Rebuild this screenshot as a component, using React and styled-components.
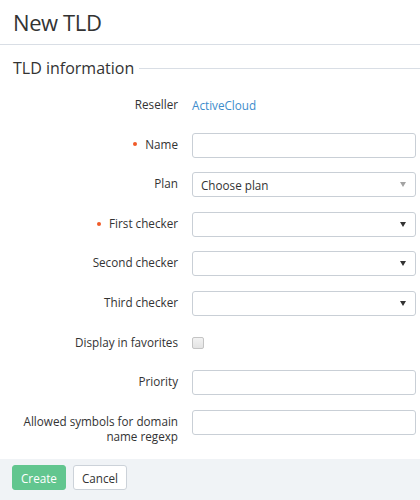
import styled, { createGlobalStyle } from "styled-components";

const Global = createGlobalStyle`
  html, body {
    margin: 0;
    padding: 0;
    background: #fff;
    font-family: "Open Sans", "Liberation Sans", sans-serif;
    color: #333;
  }
  * { box-sizing: border-box; }
`

const Page = styled.div`
  width: 420px;
  height: 500px;
  display: flex;
  flex-direction: column;
  overflow: hidden;
  & > * { flex-shrink: 0; }
`

const Header = styled.div`
  height: 45px;
  padding: 0 13px 1px;
  display: flex;
  align-items: center;
  border-bottom: 1px solid #d9dee5;
  h1 {
    margin: 0;
    font-size: 22px;
    font-weight: 400;
    color: #333;
    letter-spacing: -0.4px;
  }
`

const Legend = styled.div`
  display: flex;
  align-items: center;
  gap: 5px;
  margin: 11px 0 0 13px;
  height: 24px;
  span {
    font-size: 16px;
    color: #333;
    white-space: nowrap;
  }
  &::after {
    content: "";
    flex: 1;
    height: 1px;
    background: #d9dee5;
  }
`

const Form = styled.div`
  flex: 1;
  display: flex;
  flex-direction: column;
  gap: 14.6px;
  padding-top: 13px;
`

const Row = styled.div`
  display: grid;
  grid-template-columns: 178px 1fr;
  column-gap: 14px;
  align-items: start;
  min-height: 25px;
  padding-right: 4px;
`

const Label = styled.div`
  text-align: right;
  font-size: 11.7px;
  line-height: 15px;
  padding-top: 4px;
  color: #333;
  ${p => p.$required && `
    &::before {
      content: "";
      display: inline-block;
      width: 4px;
      height: 4px;
      border-radius: 50%;
      background: #f05a28;
      margin-right: 8px;
      vertical-align: middle;
      position: relative;
      top: -1px;
    }
  `}
`

const Value = styled.div`
  padding-top: 4px;
  line-height: 15px;
`

const Link = styled.a`
  font-size: 11.7px;
  color: #3d8ccc;
  text-decoration: none;
`

const Input = styled.input`
  width: 100%;
  height: 25px;
  border: 1px solid #c9cfd6;
  border-radius: 3px;
  background: #fff;
  font: inherit;
  padding: 0 8px;
  outline: none;
`

const Select = styled.div`
  height: 25px;
  border: 1px solid #c9cfd6;
  border-radius: 3px;
  background: #fff;
  display: flex;
  align-items: center;
  padding: 0 9px 0 8px;
  font-size: 11.7px;
  color: #333;
  &::after {
    content: "";
    margin-left: auto;
    border-left: 3px solid transparent;
    border-right: 3px solid transparent;
    border-top: 5px solid ${p => p.$muted ? "#a3a3a3" : "#333"};
  }
`

const Check = styled.span`
  display: block;
  width: 12px;
  height: 12px;
  margin-top: 6px;
  border: 1px solid #c4c4c4;
  border-radius: 2px;
  background: linear-gradient(#f2f2f2, #e3e3e3);
`

const Footer = styled.div`
  height: 41px;
  margin-top: auto;
  background: #f0f3f6;
  display: flex;
  align-items: flex-start;
  gap: 7px;
  padding: 6px 12px 0;
`

const Button = styled.button`
  height: 25px;
  padding: 0 8px;
  border-radius: 3px;
  font-family: inherit;
  font-size: 11.7px;
  border: 1px solid ${p => p.$primary ? "#62c68f" : "#ccd2d9"};
  background: ${p => p.$primary ? "#62c68f" : "#fff"};
  color: ${p => p.$primary ? "#fff" : "#333"};
`

export default function App() {
  return (
    <Page>
      <Global />
      <Header><h1>New TLD</h1></Header>
      <Legend><span>TLD information</span></Legend>
      <Form>
        <Row>
          <Label>Reseller</Label>
          <Value><Link>ActiveCloud</Link></Value>
        </Row>
        <Row>
          <Label $required>Name</Label>
          <Input />
        </Row>
        <Row>
          <Label>Plan</Label>
          <Select $muted>Choose plan</Select>
        </Row>
        <Row>
          <Label $required>First checker</Label>
          <Select />
        </Row>
        <Row>
          <Label>Second checker</Label>
          <Select />
        </Row>
        <Row>
          <Label>Third checker</Label>
          <Select />
        </Row>
        <Row>
          <Label>Display in favorites</Label>
          <div><Check /></div>
        </Row>
        <Row>
          <Label>Priority</Label>
          <Input />
        </Row>
        <Row>
          <Label>Allowed symbols for domain name regexp</Label>
          <Input />
        </Row>
        <Footer>
          <Button $primary>Create</Button>
          <Button>Cancel</Button>
        </Footer>
      </Form>
    </Page>
  );
}
